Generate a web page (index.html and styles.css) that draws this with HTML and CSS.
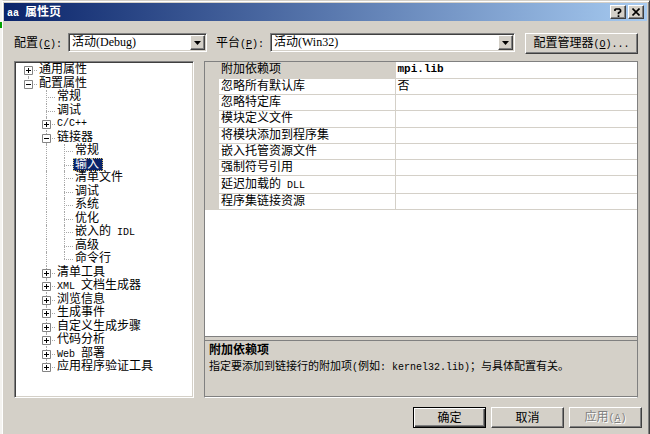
FILE: index.html
```html
<!DOCTYPE html>
<html lang="zh-CN">
<head>
<meta charset="utf-8">
<title>aa 属性页</title>
<link rel="stylesheet" href="styles.css">
</head>
<body>
<svg class="defs" aria-hidden="true">
  <symbol id="plus" viewBox="0 0 9 9"><path d="M.5.5h8v8h-8z" fill="#fff" stroke="#848484"/><path d="M2 4.500h5M4.500 2v5" stroke="#000"/></symbol>
  <symbol id="minus" viewBox="0 0 9 9"><path d="M.5.5h8v8h-8z" fill="#fff" stroke="#848484"/><path d="M2 4.500h5" stroke="#000"/></symbol>
  <symbol id="down" viewBox="0 0 7 4"><path d="M0 0h7L3.500 4z" fill="#000"/></symbol>
</svg>
<main class="window">
  <header class="titlebar">
    <h1><span class="mono">aa </span>属性页</h1>
    <button class="caption" aria-label="帮助"><svg width="8" height="9" viewBox="0 0 8 9"><path d="M1 3V1.500L2 1h3.500l1 1v1.500L4.500 5v1.200M4.500 7.300V9" fill="none" stroke="#000" stroke-width="1.700"/></svg></button>
    <button class="caption" aria-label="关闭"><svg width="8" height="8" viewBox="0 0 8 8"><path d="M.5.5l7 7M7.500.5l-7 7" stroke="#000" stroke-width="1.600"/></svg></button>
  </header>
  <div class="content">
    <div class="toolbar">
      <label for="config">配置<span class="mono">(<u>C</u>):</span></label>
      <div class="combo config"><select id="config"><option>活动(Debug)</option></select><span class="arrow"><svg width="7" height="4"><use href="#down"/></svg></span></div>
      <label class="second" for="platform">平台<span class="mono">(<u>P</u>):</span></label>
      <div class="combo platform"><select id="platform"><option>活动(Win32)</option></select><span class="arrow"><svg width="7" height="4"><use href="#down"/></svg></span></div>
      <button class="btn manager">配置管理器<span class="mono">(<u>O</u>)...</span></button>
    </div>
    <div class="panes">
      <ul class="tree" role="tree" aria-label="属性">
        <li role="treeitem" aria-level="1"><span class="cell line first elbow"><button aria-label="展开"><svg><use href="#plus"/></svg></button></span><span class="name">通用属性</span></li>
        <li role="treeitem" aria-level="1"><span class="cell line last elbow"><button aria-label="折叠"><svg><use href="#minus"/></svg></button></span><span class="name">配置属性</span></li>
        <li role="treeitem" aria-level="2"><span class="cell"></span><span class="cell line elbow"></span><span class="name">常规</span></li>
        <li role="treeitem" aria-level="2"><span class="cell"></span><span class="cell line elbow"></span><span class="name">调试</span></li>
        <li role="treeitem" aria-level="2"><span class="cell"></span><span class="cell line elbow"><button aria-label="展开"><svg><use href="#plus"/></svg></button></span><span class="name mono">C/C++</span></li>
        <li role="treeitem" aria-level="2"><span class="cell"></span><span class="cell line elbow"><button aria-label="折叠"><svg><use href="#minus"/></svg></button></span><span class="name">链接器</span></li>
        <li role="treeitem" aria-level="3"><span class="cell"></span><span class="cell line"></span><span class="cell line elbow"></span><span class="name">常规</span></li>
        <li role="treeitem" aria-level="3" aria-selected="true"><span class="cell"></span><span class="cell line"></span><span class="cell line elbow"></span><span class="name selected">输入</span></li>
        <li role="treeitem" aria-level="3"><span class="cell"></span><span class="cell line"></span><span class="cell line elbow"></span><span class="name">清单文件</span></li>
        <li role="treeitem" aria-level="3"><span class="cell"></span><span class="cell line"></span><span class="cell line elbow"></span><span class="name">调试</span></li>
        <li role="treeitem" aria-level="3"><span class="cell"></span><span class="cell line"></span><span class="cell line elbow"></span><span class="name">系统</span></li>
        <li role="treeitem" aria-level="3"><span class="cell"></span><span class="cell line"></span><span class="cell line elbow"></span><span class="name">优化</span></li>
        <li role="treeitem" aria-level="3"><span class="cell"></span><span class="cell line"></span><span class="cell line elbow"></span><span class="name">嵌入的<span class="mono"> IDL</span></span></li>
        <li role="treeitem" aria-level="3"><span class="cell"></span><span class="cell line"></span><span class="cell line elbow"></span><span class="name">高级</span></li>
        <li role="treeitem" aria-level="3"><span class="cell"></span><span class="cell line"></span><span class="cell line last elbow"></span><span class="name">命令行</span></li>
        <li role="treeitem" aria-level="2"><span class="cell"></span><span class="cell line elbow"><button aria-label="展开"><svg><use href="#plus"/></svg></button></span><span class="name">清单工具</span></li>
        <li role="treeitem" aria-level="2"><span class="cell"></span><span class="cell line elbow"><button aria-label="展开"><svg><use href="#plus"/></svg></button></span><span class="name"><span class="mono">XML </span>文档生成器</span></li>
        <li role="treeitem" aria-level="2"><span class="cell"></span><span class="cell line elbow"><button aria-label="展开"><svg><use href="#plus"/></svg></button></span><span class="name">浏览信息</span></li>
        <li role="treeitem" aria-level="2"><span class="cell"></span><span class="cell line elbow"><button aria-label="展开"><svg><use href="#plus"/></svg></button></span><span class="name">生成事件</span></li>
        <li role="treeitem" aria-level="2"><span class="cell"></span><span class="cell line elbow"><button aria-label="展开"><svg><use href="#plus"/></svg></button></span><span class="name">自定义生成步骤</span></li>
        <li role="treeitem" aria-level="2"><span class="cell"></span><span class="cell line elbow"><button aria-label="展开"><svg><use href="#plus"/></svg></button></span><span class="name">代码分析</span></li>
        <li role="treeitem" aria-level="2"><span class="cell"></span><span class="cell line elbow"><button aria-label="展开"><svg><use href="#plus"/></svg></button></span><span class="name"><span class="mono">Web </span>部署</span></li>
        <li role="treeitem" aria-level="2"><span class="cell"></span><span class="cell line last elbow"><button aria-label="展开"><svg><use href="#plus"/></svg></button></span><span class="name">应用程序验证工具</span></li>
      </ul>
      <section class="properties">
        <div class="sheet">
          <table>
            <colgroup><col class="gutter"><col class="key"><col></colgroup>
            <tbody>
              <tr class="current"><td></td><th scope="row">附加依赖项</th><td class="changed">mpi.lib</td></tr>
              <tr><td></td><th scope="row">忽略所有默认库</th><td>否</td></tr>
              <tr><td></td><th scope="row">忽略特定库</th><td></td></tr>
              <tr><td></td><th scope="row">模块定义文件</th><td></td></tr>
              <tr><td></td><th scope="row">将模块添加到程序集</th><td></td></tr>
              <tr><td></td><th scope="row">嵌入托管资源文件</th><td></td></tr>
              <tr><td></td><th scope="row">强制符号引用</th><td></td></tr>
              <tr><td></td><th scope="row">延迟加载的<span class="mono"> DLL</span></th><td></td></tr>
              <tr><td></td><th scope="row">程序集链接资源</th><td></td></tr>
            </tbody>
          </table>
        </div>
        <div class="description">
          <h2>附加依赖项</h2>
          <p>指定要添加到链接行的附加项<span class="mono">(</span>例如<span class="mono">: kernel32.lib)</span>；与具体配置有关。</p>
        </div>
      </section>
    </div>
    <footer class="actions">
      <button class="btn default">确定</button>
      <button class="btn">取消</button>
      <button class="btn" disabled>应用<span class="mono">(<u>A</u>)</span></button>
    </footer>
  </div>
</main>
</body>
</html>
```

FILE: styles.css
```css
* { box-sizing: border-box; }
body {
  margin: 0;
  padding-left: 2px;
  background: linear-gradient(#00a000, #00a000) 0 22px / 2px 6px no-repeat #f4f3f0;
  color: #000;
  font: 12px/14px "Liberation Serif", "Noto Sans CJK SC", serif;
}
.defs { position: absolute; width: 0; height: 0; }
.mono { font-family: "Liberation Mono", "Noto Sans CJK SC", monospace; font-size: 10px; white-space: pre; }
button, select { font: inherit; color: inherit; margin: 0; }
.window {
  min-height: 100vh;
  padding: 1px 1px 0 0;
  background: #d4d0c8;
  border-top: 1px solid #d4d0c8;
  border-left: 1px solid #fff;
  border-right: 1px solid #404040;
  box-shadow: inset 0 1px #fff, inset -1px 0 #808080;
}
.titlebar {
  display: flex;
  align-items: center;
  gap: 2px;
  height: 18px;
  margin: 1px 1px 0;
  padding: 0 3px;
  background: linear-gradient(90deg, #0a246a, #a6caf0);
}
.titlebar h1 { flex: 1; margin: 0; padding-top: 1px; color: #fff; font-size: 12px; line-height: 18px; font-weight: 700; }
.caption {
  display: grid;
  place-items: center;
  width: 16px;
  height: 14px;
  padding: 0;
  background: #d4d0c8;
  border: 1px solid;
  border-color: #fff #404040 #404040 #fff;
  box-shadow: inset -1px -1px #808080;
}
.content { padding: 12px 10px 0 11px; }
.toolbar { display: flex; align-items: flex-start; height: 28px; }
.toolbar label { width: 54px; line-height: 20px; white-space: nowrap; }
.toolbar .second { margin-left: 9px; }
.combo {
  position: relative;
  height: 19px;
  background: #fff;
  border: 1px solid;
  border-color: #808080 #fff #fff #808080;
  box-shadow: inset 1px 1px #404040, inset -1px -1px #d4d0c8;
}
.config { width: 139px; }
.platform { flex: 1; }
.combo select {
  display: block;
  appearance: none;
  width: 100%;
  height: 17px;
  padding: 0 18px 0 3px;
  background: none;
  border: 0;
  line-height: 17px;
}
.arrow {
  position: absolute;
  top: 1px;
  right: 1px;
  bottom: 1px;
  width: 15px;
  display: grid;
  place-items: center;
  pointer-events: none;
  background: #d4d0c8;
  border: 1px solid;
  border-color: #fff #404040 #404040 #fff;
  box-shadow: inset -1px -1px #808080;
}
.btn {
  width: 73px;
  height: 21px;
  padding: 0;
  background: #d4d0c8;
  border: 1px solid;
  border-color: #fff #404040 #404040 #fff;
  box-shadow: inset -1px -1px #808080;
  line-height: 18px;
  white-space: nowrap;
}
.btn.default { border-color: #000; box-shadow: inset 1px 1px #fff, inset -1px -1px #404040, inset -2px -2px #808080; }
.btn:disabled { color: #808080; text-shadow: 1px 1px #fff; }
.manager { width: 113px; margin-left: 10px; }
.panes { display: grid; grid-template-columns: 180px 1fr; gap: 10px; }
.tree {
  display: grid;
  grid-auto-rows: 1fr;
  height: 337px;
  margin: 0;
  padding: 1px 0 23px 4px;
  list-style: none;
  background: #fff;
  border: 1px solid;
  border-color: #808080 #fff #fff #808080;
  box-shadow: inset 1px 1px #404040, inset -1px -1px #d4d0c8;
}
.tree li { display: flex; align-items: stretch; min-height: 0; }
.cell { position: relative; width: 18px; }
.line::before { content: ""; position: absolute; left: 9px; top: 0; bottom: 0; border-left: 1px dotted #a8a8a8; }
.first::before { top: 50%; }
.last::before { bottom: 50%; }
.elbow::after { content: ""; position: absolute; left: 9px; right: 0; top: 7px; border-top: 1px dotted #a8a8a8; }
.tree button { position: absolute; z-index: 1; left: 5px; top: 3px; width: 9px; height: 9px; padding: 0; border: 0; background: none; }
.tree svg { display: block; width: 9px; height: 9px; }
.name { padding: 0 2px; line-height: 13px; white-space: nowrap; }
.selected { padding-right: 4px; background: #0a246a; color: #fff; outline: 1px dotted #d8c070; outline-offset: -1px; }
.properties {
  display: flex;
  flex-direction: column;
  border: 1px solid;
  border-color: #808080 #808080 #fff;
}
.sheet { flex: 1; background: #fff; border-bottom: 1px solid #808080; }
table { width: 100%; height: 148px; table-layout: fixed; border-collapse: collapse; }
.gutter { width: 14px; }
.key { width: 176px; }
td, th { height: 16px; padding: 0 0 0 2px; border-bottom: 1px solid #d4d0c8; font-weight: 400; line-height: 15px; text-align: left; white-space: nowrap; }
th { border-right: 1px solid #d4d0c8; }
td:first-child, .current th { background: #d4d0c8; }
.changed { font: 700 11px/15px "Liberation Mono", monospace; }
.description { height: 57px; margin-top: 3px; padding: 1px 4px; border-top: 1px solid #808080; border-bottom: 1px solid #808080; }
.description h2 { margin: 0; font-size: 12px; line-height: 16px; font-weight: 700; }
.description p { margin: 0; font-size: 11px; line-height: 16px; }
.actions { display: flex; justify-content: flex-end; gap: 5px; margin: 9px -4px 0 0; }
```
